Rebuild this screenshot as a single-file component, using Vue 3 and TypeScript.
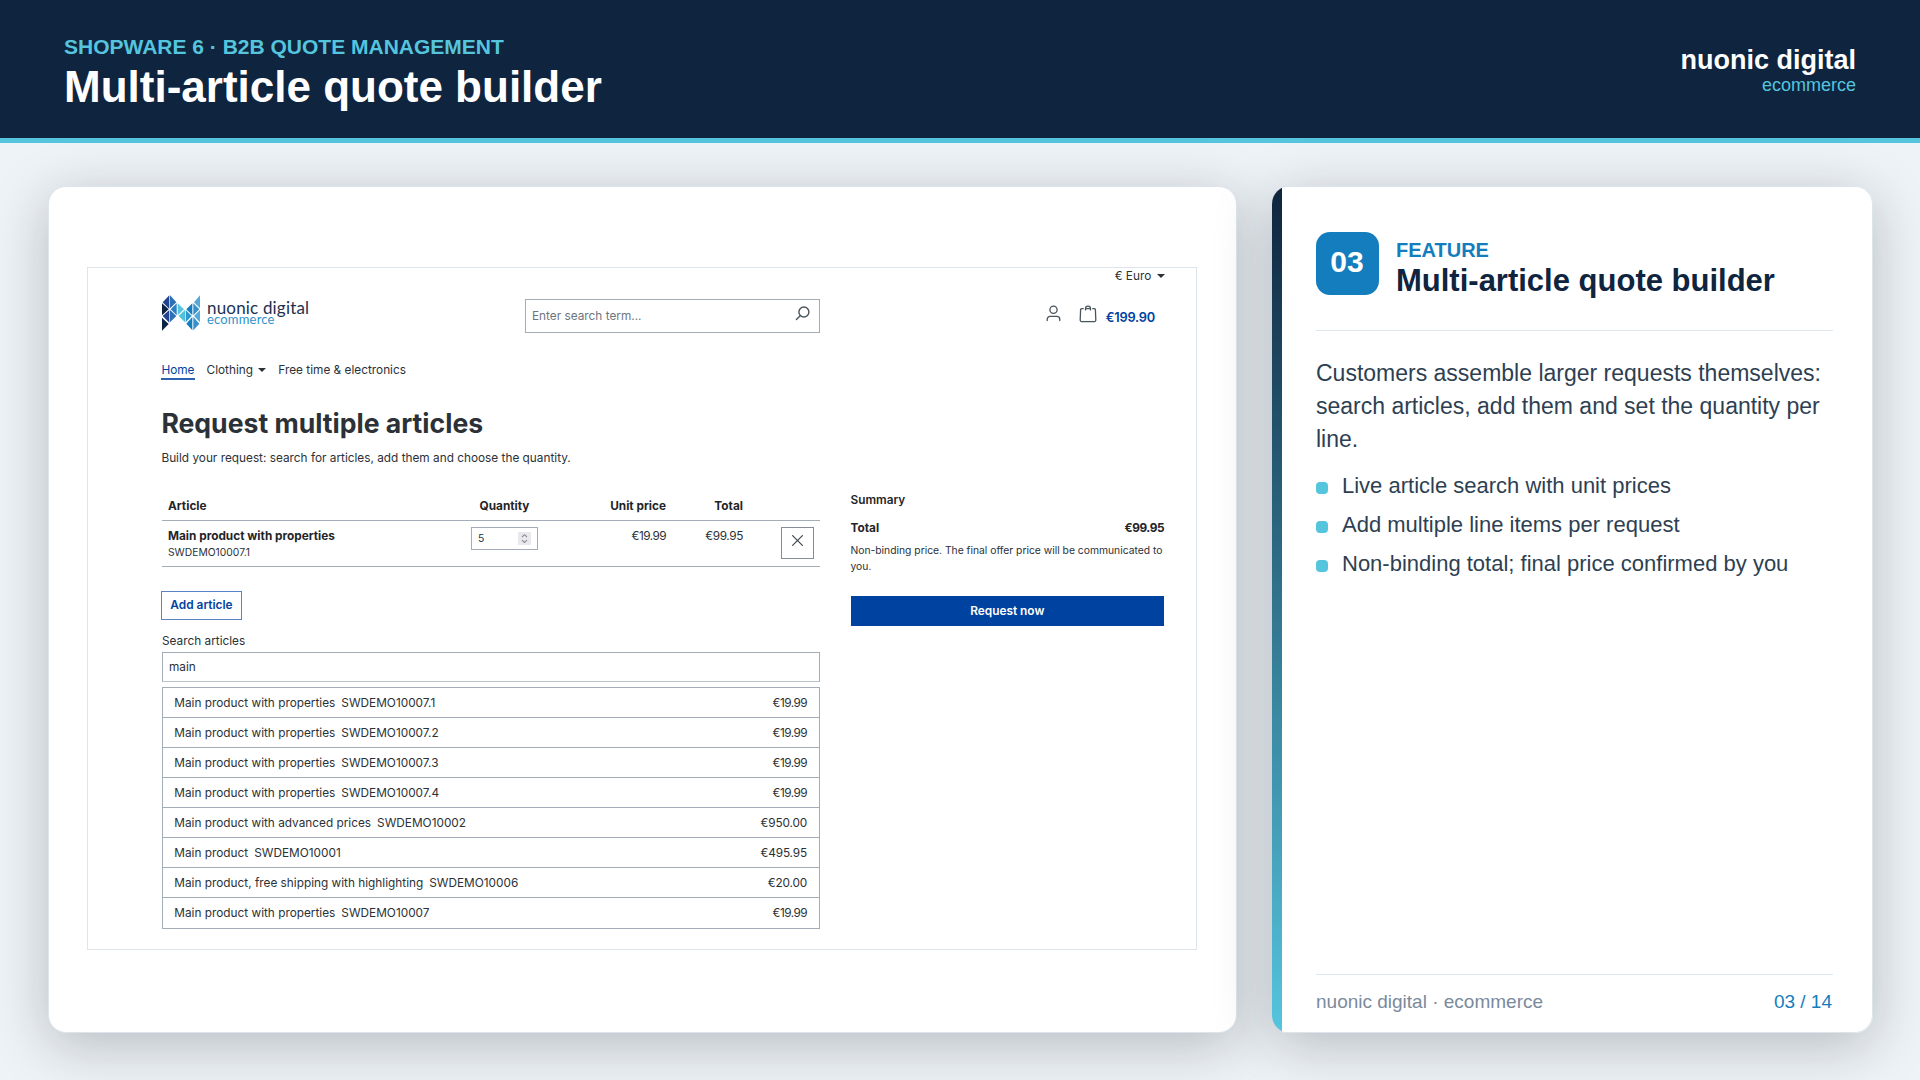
<script setup lang="ts">
interface Article {
  name: string
  sku: string
  price: string
}

const results: Article[] = [
  { name: 'Main product with properties', sku: 'SWDEMO10007.1', price: '€19.99' },
  { name: 'Main product with properties', sku: 'SWDEMO10007.2', price: '€19.99' },
  { name: 'Main product with properties', sku: 'SWDEMO10007.3', price: '€19.99' },
  { name: 'Main product with properties', sku: 'SWDEMO10007.4', price: '€19.99' },
  { name: 'Main product with advanced prices', sku: 'SWDEMO10002', price: '€950.00' },
  { name: 'Main product', sku: 'SWDEMO10001', price: '€495.95' },
  { name: 'Main product, free shipping with highlighting', sku: 'SWDEMO10006', price: '€20.00' },
  { name: 'Main product with properties', sku: 'SWDEMO10007', price: '€19.99' },
]

const points: string[] = [
  'Live article search with unit prices',
  'Add multiple line items per request',
  'Non-binding total; final price confirmed by you',
]

// Prices with a leading 1 are set a little tighter than the others
const isTight = (price: string): boolean => price.startsWith('€1')

// Triangles of the brand mark: polygon points and fill
const mark: [string, string][] = [
  ['22,1 2,22 22,42 22,1', '#20428f'],
  ['0,25 20,43 0,61', '#0d2240'],
  ['22,45 2,63 22,83', '#20428f'],
  ['0,68 20,87 0,107', '#0d2240'],
  ['24,1 43,22 24,40', '#2c6fb6'],
  ['44,25 26,43 44,61', '#2b7fc4'],
  ['24,45 43,63 24,82', '#2b70b9'],
  ['47,25 66,43 47,61', '#56c5de'],
  ['69,45 50,63 69,82', '#4fc0de'],
  ['71,45 89,63 71,82', '#2f97cf'],
  ['91,25 73,43 91,61', '#147dbd'],
  ['91,66 73,86 91,106', '#147dbd'],
  ['114,1 96,22 114,40', '#56a8d8'],
  ['94,25 112,43 94,61', '#3590cb'],
  ['114,45 96,63 114,82', '#56a8d8'],
  ['94,66 112,86 94,106', '#3590cb'],
]
</script>

<template>
  <div class="slide">
    <header class="top">
      <div>
        <div class="eyebrow">SHOPWARE 6 · B2B QUOTE MANAGEMENT</div>
        <h1 class="title">Multi-article quote builder</h1>
      </div>
      <div class="brand">
        <div class="brand-name">nuonic digital</div>
        <div class="brand-sub">ecommerce</div>
      </div>
    </header>

    <main class="stage">
      <section class="card shot">
        <div class="shop">
          <div class="currency">€ Euro <i class="caret"></i></div>

          <div class="shop-head">
            <div class="logo">
              <svg width="38" height="36" viewBox="0 0 114 108">
                <polygon v-for="(t, i) in mark" :key="i" :points="t[0]" :fill="t[1]" />
              </svg>
              <div class="logo-text">
                <span class="logo-name">nuonic digital</span>
                <span class="logo-sub">ecommerce</span>
              </div>
            </div>
            <div class="search">
              <span>Enter search term...</span>
              <svg width="15" height="15" viewBox="0 0 15 15" fill="none" stroke="#4a545b" stroke-width="1.4" stroke-linecap="round">
                <circle cx="8.9" cy="6" r="5" />
                <path d="M5.2 9.7 1.4 13.5" />
              </svg>
            </div>
            <div class="actions">
              <svg class="user" width="15" height="17" viewBox="0 0 15 17" fill="none" stroke="#4a545b" stroke-width="1.3" stroke-linecap="round">
                <circle cx="7.5" cy="4.7" r="3.6" />
                <path d="M1.2 15.6v-1.2a3 3 0 0 1 3-3h6.6a3 3 0 0 1 3 3v1.2" />
              </svg>
              <svg class="bag" width="18" height="18" viewBox="0 0 18 18" fill="none" stroke="#4a545b" stroke-width="1.3" stroke-linecap="round" stroke-linejoin="round">
                <path d="M4.2 3.7H2.6a1 1 0 0 0-1 1L1.200 15a1.500 1.500 0 0 0 1.500 1.600h12.600a1.500 1.500 0 0 0 1.500-1.600l-.4-10.300a1 1 0 0 0-1-1H13.800" />
                <path d="M6.500 4.900V3.600a2.500 2.500 0 0 1 5 0v1.300M7.600 3.700h2.800" />
              </svg>
              <span class="cart-total">€199.90</span>
            </div>
          </div>

          <nav class="nav">
            <a class="active">Home</a>
            <a>Clothing <i class="caret"></i></a>
            <a>Free time &amp; electronics</a>
          </nav>

          <h2 class="heading">Request multiple articles</h2>
          <p class="lead">Build your request: search for articles, add them and choose the quantity.</p>

          <div class="columns">
            <div class="main">
              <div class="grid thead">
                <span>Article</span>
                <span class="center">Quantity</span>
                <span class="right">Unit price</span>
                <span class="right">Total</span>
              </div>
              <div class="grid trow">
                <div class="cell">
                  <div class="name">Main product with properties</div>
                  <div class="sku">SWDEMO10007.1</div>
                </div>
                <div class="qty">
                  <span>5</span>
                  <svg width="13" height="13" viewBox="0 0 13 13" fill="none" stroke="#8b8b95" stroke-width="1.1">
                    <rect width="13" height="13" fill="#e9e9ed" stroke="none" />
                    <path d="M4 5 6.500 2.700 9 5M4 8.200 6.500 10.500 9 8.200" />
                  </svg>
                </div>
                <span class="cell right price tight">€19.99</span>
                <span class="cell right price row-total">€99.95</span>
                <button class="remove" type="button">
                  <svg width="11" height="11" viewBox="0 0 11 11" stroke="#3f4850" stroke-width="1.200" stroke-linecap="round">
                    <path d="M.6.600 10.400 10.400M10.400.600.600 10.400" />
                  </svg>
                </button>
              </div>

              <button class="add" type="button">Add article</button>
              <div class="label">Search articles</div>
              <div class="input">main</div>
              <ul class="results">
                <li v-for="r in results" :key="r.sku">
                  <span>{{ r.name }}</span>
                  <span class="code">{{ r.sku }}</span>
                  <span class="price" :class="{ tight: isTight(r.price) }">{{ r.price }}</span>
                </li>
              </ul>
            </div>

            <aside class="summary">
              <div class="sum-title">Summary</div>
              <div class="sum-total"><span>Total</span><span class="sum-price">€99.95</span></div>
              <p class="note">Non-binding price. The final offer price will be communicated to you.</p>
              <button class="request" type="button">Request now</button>
            </aside>
          </div>
        </div>
      </section>

      <section class="card info">
        <div class="pane">
          <div class="feature">
            <div class="badge">03</div>
            <div class="feature-text">
              <div class="kicker">FEATURE</div>
              <h3>Multi-article quote builder</h3>
            </div>
          </div>
          <p class="copy">Customers assemble larger requests themselves: search articles, add them and set the quantity per line.</p>
          <ul class="points">
            <li v-for="p in points" :key="p">{{ p }}</li>
          </ul>
          <footer class="foot">
            <span>nuonic digital · ecommerce</span>
            <span class="page">03 / 14</span>
          </footer>
        </div>
      </section>
    </main>
  </div>
</template>

<style>
body { margin: 0; background: #eef3f7; }
</style>

<style scoped>
* { box-sizing: border-box; }
h1, h2, h3, p, ul { margin: 0; padding: 0; list-style: none; }

.slide {
  width: 1920px;
  height: 1080px;
  overflow: hidden;
  display: flex;
  flex-direction: column;
  background: #eef3f7;
  font-family: "Liberation Sans", Arial, sans-serif;
}

.top {
  flex: none;
  height: 143px;
  padding: 35px 64px 0;
  display: flex;
  justify-content: space-between;
  align-items: flex-start;
  background: #0f243e;
  border-bottom: 5px solid #55c5de;
  color: #fff;
}
.eyebrow { font-size: 21px; line-height: 24px; font-weight: 700; color: #55c5de; }
.title { margin-top: 4px; font-size: 44px; line-height: 48px; font-weight: 700; }
.brand { padding-top: 10px; text-align: right; }
.brand-name { font-size: 27px; line-height: 30px; font-weight: 700; }
.brand-sub { margin-top: -1px; font-size: 18px; line-height: 22px; color: #55c5de; }

.stage { flex: 1; display: flex; gap: 35px; padding: 43px 47px 47px 48px; align-items: stretch; }
.card { border-radius: 18px; background: #fff; box-shadow: 0 12px 56px rgba(15, 24, 32, 0.25); }

.shot { width: 1189px; border: 1px solid #dce5ec; padding: 80px 0 0 38px; }
.shop {
  width: 1110px;
  height: 683px;
  border: 1px solid #dce5ec;
  padding: 0 32px 0 74px;
  font-family: Inter, sans-serif;
  font-size: 11.82px;
  line-height: 16px;
  color: #2b3136;
}
.caret { display: inline-block; margin-left: 2px; vertical-align: 2px; border: 4px solid transparent; border-top-color: currentColor; border-bottom: 0; }
.currency { margin-right: -0.6px; text-align: right; }

.shop-head { display: flex; align-items: flex-start; margin-top: 11px; height: 38px; }
.logo { display: flex; width: 363px; }
.logo-text { margin-left: 7px; display: flex; flex-direction: column; font-family: Lato, sans-serif; padding-top: 3px; }
.logo-name { font-size: 17px; line-height: 19px; letter-spacing: 0.18px; color: #1d3150; }
.logo-sub { margin-top: -3px; font-size: 13px; line-height: 11px; letter-spacing: 0.18px; color: #2f93cc; }
.search {
  width: 295px;
  height: 34px;
  margin-top: 4px;
  padding: 0 9px 0 6px;
  display: flex;
  align-items: center;
  justify-content: space-between;
  border: 1px solid #a3adb9;
  color: #6d7580;
}
.search svg { margin-top: -5px; }
.actions { margin-left: auto; margin-right: 9px; display: flex; align-items: flex-start; color: #0042a0; }
.user { margin-top: 10px; }
.bag { margin: 9.5px 0 0 18px; }
.cart-total { margin: 14px 0 0 8.5px; font-size: 12.8px; line-height: 18px; font-weight: 600; letter-spacing: -0.2px; }

.nav { display: flex; gap: 12px; margin: 29px 0 0 -0.6px; }
.nav a { height: 18px; }
.nav .active { color: #0042a0; border-bottom: 2px solid #2f63b0; }

.heading { margin: 27px 0 0 -0.6px; font-size: 26.58px; line-height: 32px; font-weight: 700; }
.lead { margin: 11px 0 0 -0.6px; }

.columns { display: flex; gap: 31px; }
.main { width: 658px; }
.grid { display: grid; grid-template-columns: 303px 67px 128px 77px 71px; padding: 0 6px; border-bottom: 1px solid #a3adb9; }
.center { text-align: center; }
.right { text-align: right; }
.thead { height: 23px; margin-top: 32px; font-weight: 700; color: #1f2529; }
.trow { height: 46px; }
.cell { padding-top: 7px; }
.name { font-weight: 700; color: #1f2529; }
.sku { font-size: 10.32px; line-height: 16px; }
.price { letter-spacing: -0.15px; }
.price.row-total { letter-spacing: -0.4px; }
.price.tight { letter-spacing: -0.55px; }
.qty {
  height: 23px;
  margin-top: 6px;
  padding: 0 6px;
  display: flex;
  align-items: center;
  justify-content: space-between;
  border: 1px solid #a3adb9;
  font-size: 10.4px;
}
.remove {
  width: 33px;
  height: 32px;
  margin-top: 6px;
  justify-self: end;
  padding: 0 0 5px;
  display: flex;
  align-items: center;
  justify-content: center;
  border: 1px solid #868d99;
  background: #fff;
}
.add {
  display: block;
  width: 81px;
  height: 29px;
  margin: 24px 0 0 -1px;
  padding: 0 0 1px;
  border: 1px solid #5b82c2;
  background: #fff;
  color: #0042a0;
  font: 600 11.86px Inter, sans-serif;
}
.label { margin-top: 13px; }
.input { margin-top: 3px; height: 30px; padding: 6px; border: 1px solid #a3adb9; border-bottom-color: #bcc4cc; }
.results { margin-top: 5px; border: 1px solid #a3adb9; border-bottom: 0; }
.results li { height: 30.07px; padding: 0 12px 0 11.3px; display: flex; line-height: 30px; border-bottom: 1px solid #a3adb9; }
.code { margin-left: 6px; }
.results .price { margin-left: auto; }

.summary { flex: 1; margin-left: -0.5px; padding-top: 25.5px; color: #1f2529; }
.sum-title { font-weight: 600; }
.sum-total { display: flex; justify-content: space-between; margin-top: 12px; font-weight: 700; }
.sum-price { letter-spacing: -0.45px; }
.note { margin: 6px 0 0; font-size: 10.32px; line-height: 16px; color: #2b3136; }
.request {
  display: block;
  width: 100%;
  height: 30px;
  margin-top: 22.5px;
  padding: 0;
  border: 0;
  background: #0042a0;
  color: #fff;
  font: 600 11.86px Inter, sans-serif;
}

.info {
  flex: 1;
  display: flex;
  padding-left: 10px;
  background: linear-gradient(#0f243e, #55c5de) left / 10px 100% no-repeat, #fff;
}
.pane {
  flex: 1;
  display: flex;
  flex-direction: column;
  padding: 45px 39px 18px 34px;
  border: 1px solid #dce5ec;
  border-left: 0;
  border-radius: 0 18px 18px 0;
  color: #2e3f52;
}
.feature { display: flex; height: 99px; border-bottom: 1px solid #dce7ee; }
.badge { width: 63px; height: 63px; padding-right: 1px; border-radius: 14px; background: #147dbd; color: #fff; font-size: 30px; line-height: 59px; font-weight: 700; text-align: center; }
.feature-text { margin-left: 17px; padding-top: 6px; }
.kicker { font-size: 20px; line-height: 24px; font-weight: 700; color: #147dbd; }
h3 { margin-top: 1px; font-size: 31px; line-height: 36px; font-weight: 700; color: #0f243e; white-space: nowrap; }
.copy { margin-top: 26px; font-size: 23px; line-height: 33px; }
.points { margin-top: 10px; }
.points li { display: flex; height: 39px; font-size: 22px; line-height: 39px; }
.points li::before { content: ""; flex: none; width: 12px; height: 12px; margin: 16px 14px 0 0; border-radius: 4px; background: #55c5de; }
.foot { margin-top: auto; padding: 15px 1px 0 0; height: 40px; display: flex; justify-content: space-between; border-top: 1px solid #dce7ee; font-size: 19px; line-height: 24px; color: #7b8a9b; }
.page { color: #147dbd; }
</style>
